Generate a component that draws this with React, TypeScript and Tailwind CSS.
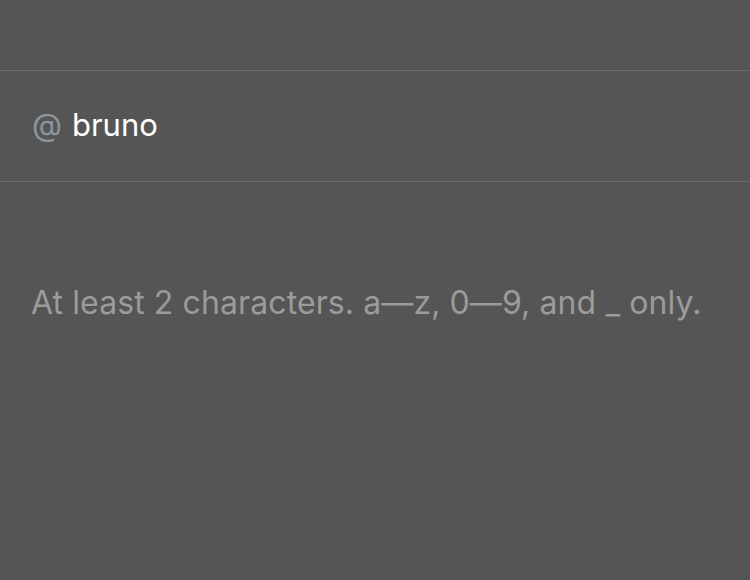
export default function App() {
  return (
    <div className="w-[750px] h-[580px] bg-[#555555] font-['Inter','Noto_Sans',sans-serif]">
      <div className="h-[70px]" />
      <div className="h-[112px] border-y border-[#6b6b6b] flex items-center px-[32px] gap-[10px] text-[31px] leading-[40px] pb-[2px]">
        <span className="text-[#8b969e]">@</span>
        <span className="text-white">bruno</span>
      </div>
      <div className="px-[31px] pt-[97px] text-[32px] leading-[48px] tracking-[0.1px] text-[#9b9b9b]">
        At least 2 characters. a—z, 0—9, and _ only.
      </div>
    </div>
  );
}
